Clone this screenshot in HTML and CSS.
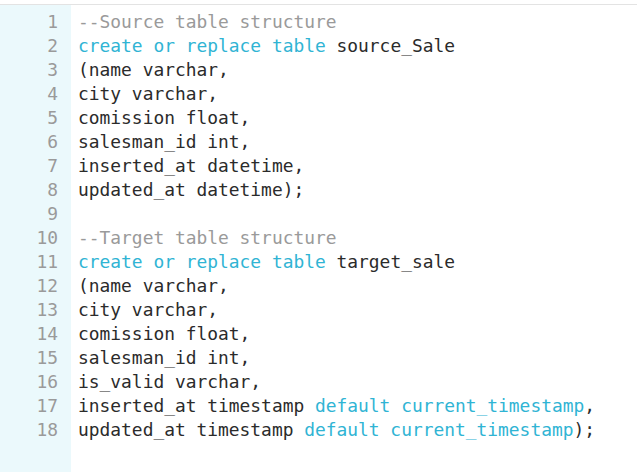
FILE: index.html
```html
<!DOCTYPE html>
<html>
<head>
<meta charset="utf-8">
<link rel="stylesheet" href="styles.css">
</head>
<body>
<div class="editor">
  <div class="gutter">
    <div class="ln">1</div><div class="ln">2</div><div class="ln">3</div><div class="ln">4</div><div class="ln">5</div><div class="ln">6</div><div class="ln">7</div><div class="ln">8</div><div class="ln">9</div><div class="ln">10</div><div class="ln">11</div><div class="ln">12</div><div class="ln">13</div><div class="ln">14</div><div class="ln">15</div><div class="ln">16</div><div class="ln">17</div><div class="ln">18</div>
  </div>
  <div class="code">
    <div class="line"><span class="cm">--Source table structure</span></div>
    <div class="line"><span class="kw">create or replace table</span> source_Sale</div>
    <div class="line">(name varchar,</div>
    <div class="line">city varchar,</div>
    <div class="line">comission float,</div>
    <div class="line">salesman_id int,</div>
    <div class="line">inserted_at datetime,</div>
    <div class="line">updated_at datetime);</div>
    <div class="line"></div>
    <div class="line"><span class="cm">--Target table structure</span></div>
    <div class="line"><span class="kw">create or replace table</span> target_sale</div>
    <div class="line">(name varchar,</div>
    <div class="line">city varchar,</div>
    <div class="line">comission float,</div>
    <div class="line">salesman_id int,</div>
    <div class="line">is_valid varchar,</div>
    <div class="line">inserted_at timestamp <span class="kw">default current_timestamp</span>,</div>
    <div class="line">updated_at timestamp <span class="kw">default current_timestamp</span>);</div>
  </div>
</div>
</body>
</html>
```
FILE: styles.css
```css
html, body {
  margin: 0;
  padding: 0;
  background: #ffffff;
}
body {
  padding-top: 4px;
  height: 472px;
  box-sizing: border-box;
  overflow: hidden;
}
.editor {
  display: flex;
  border-top: 1px solid #e3e3e3;
  height: 467px;
  font-family: "DejaVu Sans Mono", "Liberation Mono", monospace;
  font-size: 17.9px;
  line-height: 24px;
}
.gutter {
  width: 71px;
  box-sizing: border-box;
  background: #ebf9fc;
  padding: 5px 13px 0 0;
  text-align: right;
  color: #9a9a9a;
}
.ln {
  height: 24px;
}
.code {
  padding: 5px 0 0 7px;
  color: #2b2b2b;
}
.line {
  height: 24px;
  white-space: pre;
}
.cm { color: #9a9a9a; }
.kw { color: #30b4d4; }
```
